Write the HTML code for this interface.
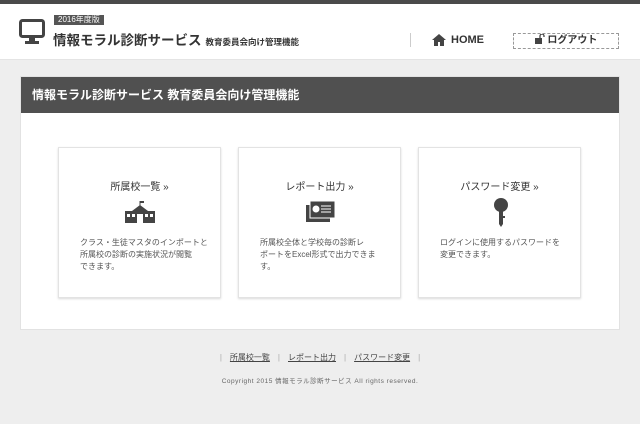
<!DOCTYPE html>
<html><head><meta charset="utf-8"><style>
*{margin:0;padding:0;box-sizing:border-box}
body{width:640px;height:424px;background:#eeeeee;font-family:"Liberation Sans","Noto Sans CJK JP",sans-serif;color:#333;position:relative;overflow:hidden}
.top{position:absolute;left:0;top:0;width:640px;height:4px;background:#4a4a4a}
.hdr{position:absolute;left:0;top:4px;width:640px;height:56px;background:#fff;border-bottom:1px solid #e4e4e4}
.abs{position:absolute}
.badge{left:54px;top:15px;background:#555;color:#fff;font-size:8px;line-height:10px;padding:0 4px}
.title{left:53px;top:29px;font-size:13.5px;font-weight:bold;color:#333;white-space:nowrap}
.title small{font-size:8.5px;margin-left:4px}
.vl{left:410px;top:33px;width:1px;height:14px;background:#ccc}
.home{left:434px;top:34px;font-size:11px;font-weight:bold;color:#333}
.logout{left:513px;top:33px;width:106px;height:16px;border:1px dashed #999;font-size:10px;font-weight:bold;text-align:center;line-height:14px;color:#333}
.panel{left:20px;top:76px;width:600px;height:254px;background:#fff;border:1px solid #e2e2e2}
.bar{position:absolute;left:0;top:0;width:598px;height:36px;background:#505050;color:#fff;font-size:12px;font-weight:bold;line-height:36px;padding-left:11px}
.card{position:absolute;top:70px;width:163px;height:151px;background:#fff;border:1px solid #e3e3e3;box-shadow:0 1px 2px rgba(0,0,0,.15)}
.card h3{position:absolute;top:30px;width:100%;text-align:center;font-size:10px;font-weight:normal;color:#333}
.card p{position:absolute;left:21px;top:89px;width:140px;font-size:8px;line-height:12px;color:#555;white-space:nowrap}
.card svg{position:absolute}
.fl{left:0;top:352px;width:640px;text-align:center;font-size:8px;color:#555}
.fl span{color:#aaa;margin:0 8px}
.fl u{color:#444}
.copy{left:0;top:375px;width:640px;text-align:center;font-size:6.5px;color:#666;letter-spacing:0.5px}
</style></head><body>
<div class="top"></div>
<div class="hdr"></div>
<svg class="abs" style="left:19px;top:19px" width="26" height="27" viewBox="0 0 26 27"><rect x="1.5" y="1.5" width="23" height="16" rx="2" fill="none" stroke="#444" stroke-width="3"/><rect x="10" y="19" width="6" height="4" fill="#444"/><rect x="6" y="22" width="14" height="3" fill="#444"/></svg>
<div class="abs badge">2016年度版</div>
<div class="abs title">情報モラル診断サービス<small>教育委員会向け管理機能</small></div>
<div class="abs vl"></div>
<svg class="abs" style="left:432px;top:34px" width="14" height="12" viewBox="0 0 14 12"><path d="M7 0L0 6h2v6h4V8h2v4h4V6h2z" fill="#444"/></svg>
<div class="abs home" style="left:451px">HOME</div>
<div class="abs logout"><svg width="10" height="10" viewBox="0 0 10 10" style="vertical-align:-1px"><rect x="0" y="4" width="7" height="6" fill="#444"/><path d="M5 4V2a2 2 0 0 1 4 0v1" fill="none" stroke="#444" stroke-width="1.3"/></svg> ログアウト</div>
<div class="abs panel">
<div class="bar">情報モラル診断サービス 教育委員会向け管理機能</div>
<div class="card" style="left:37px"><h3>所属校一覧 »</h3>
<svg style="left:65px;top:53px" width="32" height="22" viewBox="0 0 32 22"><path d="M16 0v5" stroke="#444"/><path d="M16 0h4v2h-4z" fill="#444"/><path d="M8 10l8-6 8 6z" fill="#444"/><rect x="1" y="10" width="30" height="12" fill="#444"/><rect x="13" y="13" width="6" height="9" fill="#fff"/><rect x="3" y="13" width="3" height="3" fill="#fff"/><rect x="8" y="13" width="3" height="3" fill="#fff"/><rect x="21" y="13" width="3" height="3" fill="#fff"/><rect x="26" y="13" width="3" height="3" fill="#fff"/></svg>
<p>クラス・生徒マスタのインポートと<br>所属校の診断の実施状況が閲覧<br>できます。</p></div>
<div class="card" style="left:217px"><h3>レポート出力 »</h3>
<svg style="left:67px;top:53px" width="30" height="22" viewBox="0 0 30 22"><rect x="0" y="4" width="24" height="17" fill="#444"/><rect x="4" y="0" width="25" height="17" fill="#444" stroke="#fff" stroke-width="1"/><circle cx="10" cy="8" r="3.5" fill="#fff"/><path d="M15 5h10M15 8h10M15 11h10" stroke="#fff"/></svg>
<p>所属校全体と学校毎の診断レ<br>ポートをExcel形式で出力できま<br>す。</p></div>
<div class="card" style="left:397px"><h3>パスワード変更 »</h3>
<svg style="left:74px;top:50px" width="16" height="30" viewBox="0 0 16 30"><circle cx="8" cy="7" r="7" fill="#444"/><rect x="6" y="12" width="4" height="14" fill="#444"/><path d="M6 26l2 3 2-3z" fill="#444"/><rect x="10" y="18" width="2" height="2" fill="#444"/></svg>
<p>ログインに使用するパスワードを<br>変更できます。</p></div>
</div>
<div class="abs fl"><span>|</span><u>所属校一覧</u><span>|</span><u>レポート出力</u><span>|</span><u>パスワード変更</u><span>|</span></div>
<div class="abs copy">Copyright 2015 情報モラル診断サービス All rights reserved.</div>
</body></html>
